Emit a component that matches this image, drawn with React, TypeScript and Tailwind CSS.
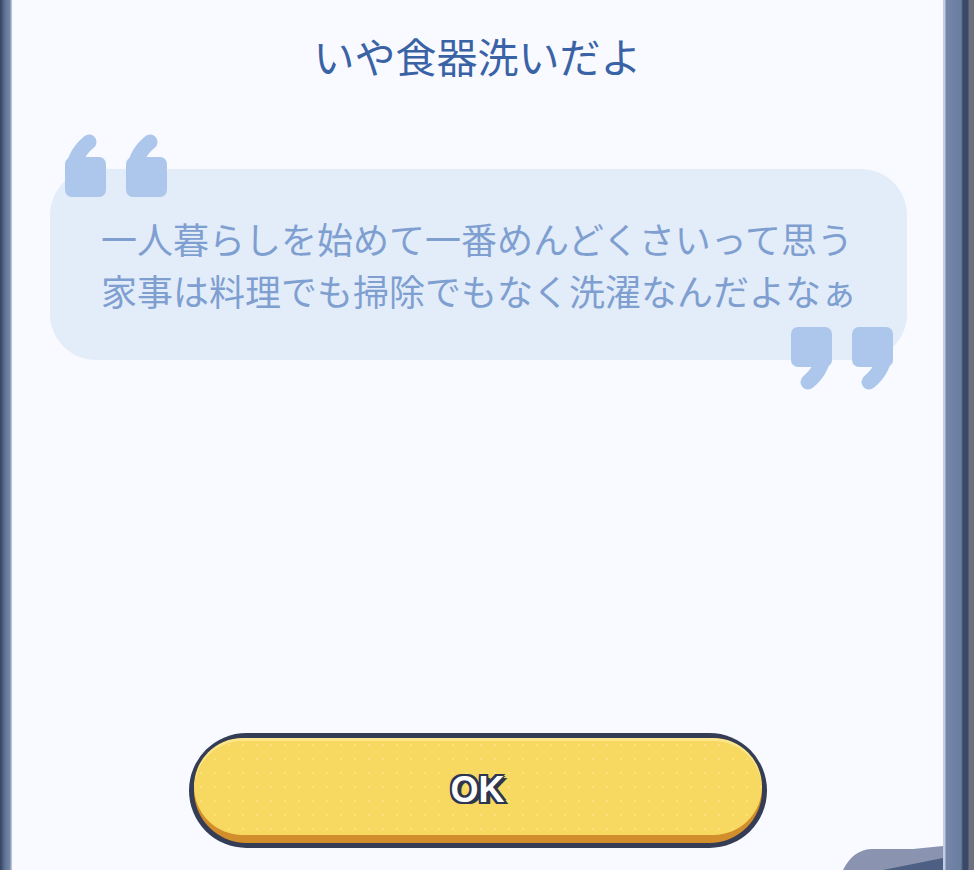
import React from 'react';

// 「“」「”」の飾り。角丸の四角に太い尻尾がついた粒を2つ並べる
function QuoteMark({ className }: { className?: string }) {
  const drops = [0, 61];
  return (
    <svg width="106" height="64" viewBox="0 0 106 64" className={className}>
      <g fill="#adc6ec" stroke="#adc6ec">
        {drops.map((x) => (
          <g key={x} transform={`translate(${x} 0)`}>
            <rect x="0" y="24" width="41" height="40" rx="7" stroke="none" />
            <path d="M8,42 Q8,22 24,9" fill="none" strokeWidth="15" strokeLinecap="round" />
          </g>
        ))}
      </g>
    </svg>
  );
}

function OkButton() {
  return (
    <button
      type="button"
      className="w-[578px] h-[115px] rounded-full bg-[#343d55] p-[5px] cursor-pointer"
    >
      <div className="h-full rounded-full bg-[#d28e2a] pb-[8px]">
        <div className="h-full rounded-full bg-[#f7d860] shadow-[inset_0_3px_0_#fbe68c] bg-[radial-gradient(circle,#fae27e_1px,transparent_1.5px)] bg-[length:14px_14px] flex items-center justify-center pt-[6px]">
          <span className="font-['Liberation_Sans',Arial,sans-serif] font-bold text-[36px] leading-none text-white [text-shadow:2px_0_0_#2d3550,-2px_0_0_#2d3550,0_2px_0_#2d3550,0_-2px_0_#2d3550,2px_2px_0_#2d3550,-2px_-2px_0_#2d3550,2px_-2px_0_#2d3550,-2px_2px_0_#2d3550,4px_2px_0_#2d3550]">
            OK
          </span>
        </div>
      </div>
    </button>
  );
}

export default function App() {
  return (
    <div className="h-screen w-full flex bg-[#f8faff] overflow-hidden font-['Noto_Sans_CJK_JP','Noto_Sans',sans-serif]">
      {/* 左の枠 */}
      <div className="w-[12px] shrink-0 bg-[linear-gradient(to_right,#34425e,#5f7294_40%,#7587a8_80%,#c9d1e3)]" />

      <main className="relative flex-1 flex flex-col">
        <h1 className="pt-[31px] text-center text-[41px] leading-[48px] text-[#3a63a6]">
          いや食器洗いだよ
        </h1>

        <div className="relative mt-[90px] ml-[38px] mr-[36px] h-[191px] rounded-[46px] bg-[#e3edf9] pl-[51px] pt-[43px]">
          <QuoteMark className="absolute left-[15px] top-[-36px]" />
          <p className="whitespace-nowrap text-[36px] leading-[52px] text-[#7f9fd1]">
            一人暮らしを始めて一番めんどくさいって思う
            <br />
            家事は料理でも掃除でもなく洗濯なんだよなぁ
          </p>
          <QuoteMark className="absolute right-[14px] bottom-[-31px] rotate-180" />
        </div>

        <div className="flex-1" />

        <div className="flex justify-center pb-[22px]">
          <OkButton />
        </div>

        {/* めくれた右下の角 */}
        <svg
          width="100"
          height="24"
          viewBox="0 0 100 24"
          className="absolute right-0 bottom-0"
        >
          <path d="M0,24 Q10,4 28,3 L70,3 L100,0 L100,24 Z" fill="#8a93b0" />
          <path d="M40,24 L100,12 L100,24 Z" fill="#4d5f82" />
        </svg>
      </main>

      {/* 右の枠 */}
      <div className="w-[31px] shrink-0 bg-[linear-gradient(to_right,#c3cce0_0,#c3cce0_2px,#7486a8_3px,#6a7ea2_18px,#3b4966_20px,#3b4966_25px,#6c7282_26px)]" />
    </div>
  );
}
